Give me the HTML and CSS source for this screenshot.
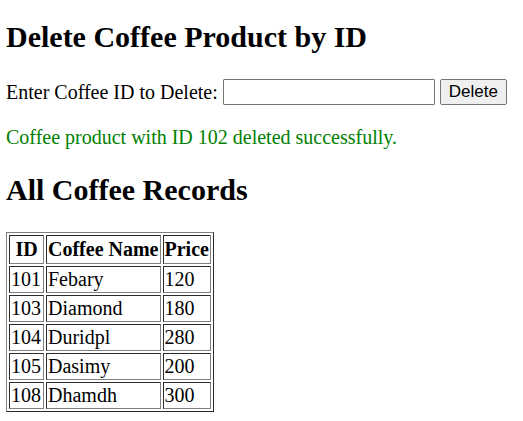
FILE: index.html
```html
<!DOCTYPE html>
<html lang="en">
<head>
<meta charset="utf-8">
<title>Delete Coffee Product</title>
<link rel="stylesheet" href="styles.css">
</head>
<body>
<h2>Delete Coffee Product by ID</h2>
<form class="delete-form">
<label for="coffee-id">Enter Coffee ID to Delete:</label>
<input class="id-field" type="text" id="coffee-id" name="id">
<button class="delete-button" type="submit">Delete</button>
</form>
<p class="message">Coffee product with ID 102 deleted successfully.</p>
<h2>All Coffee Records</h2>
<table class="records">
<thead>
<tr><th class="id-column">ID</th><th>Coffee Name</th><th>Price</th></tr>
</thead>
<tbody>
<tr><td>101</td><td>Febary</td><td>120</td></tr>
<tr><td>103</td><td>Diamond</td><td>180</td></tr>
<tr><td>104</td><td>Duridpl</td><td>280</td></tr>
<tr><td>105</td><td>Dasimy</td><td>200</td></tr>
<tr><td>108</td><td>Dhamdh</td><td>300</td></tr>
</tbody>
</table>
</body>
</html>
```
FILE: styles.css
```css
body {
  margin: 19px 6px 8px;
  background: #fff;
  color: #000;
  font: 20px/23px "Liberation Serif", "Times New Roman", serif;
}

h2 {
  margin: 0 0 24px;
  font-size: 30px;
  line-height: 36px;
}

.delete-form {
  display: flex;
  align-items: center;
  gap: 5px;
  margin: 0 0 21px;
}

.id-field {
  box-sizing: border-box;
  width: 212px;
  height: 26px;
  padding: 1px 2px;
  border: 1px solid #767676;
  border-radius: 1px;
  background: #fff;
  font: 17px "Liberation Sans", Arial, sans-serif;
}

.delete-button {
  box-sizing: border-box;
  height: 26px;
  padding: 1px 8px;
  border: 1px solid #767676;
  border-radius: 2px;
  background: #efefef;
  color: #000;
  font: 17px "Liberation Sans", Arial, sans-serif;
}

.message {
  margin: 0 0 23px;
  color: #008000;
}

.records {
  border: 1px outset #808080;
  border-collapse: separate;
  border-spacing: 2px;
}

.records th,
.records td {
  padding: 1px;
  border: 1px inset #808080;
  text-align: left;
}

.records th {
  padding: 2px 1px;
  text-align: center;
}

.records .id-column {
  width: 31px;
}
```
